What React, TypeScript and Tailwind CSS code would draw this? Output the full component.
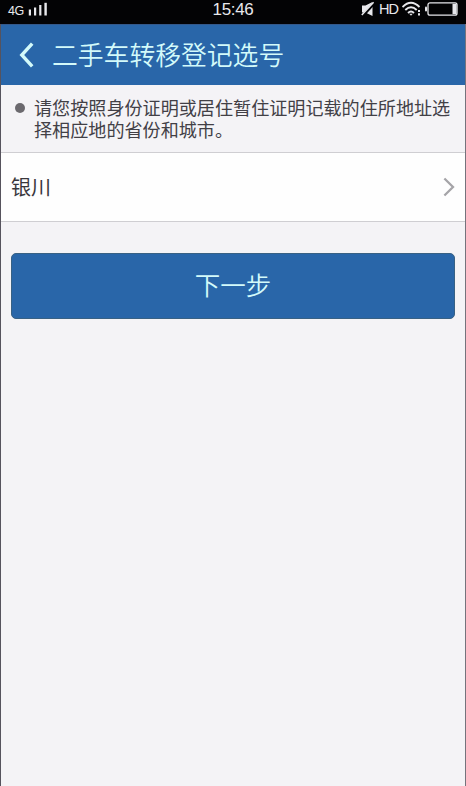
const NOTICE_LINES = ["请您按照身份证明或居住暂住证明记载的住所地址选", "择相应地的省份和城市。"];

function StatusBar() {
  return (
    <div className="grid h-6 shrink-0 grid-cols-3 items-start bg-[#030305] text-[#e8e8ec]">
      <div className="flex pl-2">
        <span className="pt-[4px] text-[12.5px] leading-[14px] tracking-[-0.5px]">4G</span>
        <svg className="ml-1 mt-[2px]" width="20" height="15" viewBox="0 0 20 15" fill="currentColor">
          <rect x="0.8" y="7.5" width="2.2" height="6" />
          <rect x="6" y="5.5" width="2.2" height="8" />
          <rect x="11.2" y="3" width="2.2" height="10.5" />
          <rect x="16.4" y="0.8" width="2.4" height="12.7" />
        </svg>
      </div>
      <div className="pt-px text-center text-[17px] leading-[18px] tracking-[-0.35px]">15:46</div>
      <div className="flex justify-end pr-[8px]">
        <svg className="mt-px" width="14" height="16" viewBox="0 0 14 16">
          <path d="M1 4.5h3.5l7-3.5v14l-7-3.5H1z" fill="currentColor" />
          <path d="M1.2 15.2L13.2 2.2" stroke="#030305" strokeWidth="3" />
          <path d="M0.8 14L12.6 1.2" stroke="currentColor" strokeWidth="1.5" />
        </svg>
        <span className="ml-[4px] pt-[2px] text-[14.5px] leading-[15px] tracking-[-1px]">HD</span>
        <svg className="ml-[4px] mt-px" width="21" height="16" viewBox="0 0 21 16" fill="none" stroke="currentColor" strokeWidth="1.9">
          <path d="M0.5 6Q9 -2.5 17.5 6" />
          <path d="M3.3 9Q9 3.5 14.7 9" />
          <path d="M6 12Q9 9.2 12 12" />
          <path d="M7.3 12.7h3.4L9 14.8z" fill="currentColor" stroke="none" />
          <path d="M17 9v2M17 12.3v2.2" strokeWidth="2" />
        </svg>
        <svg className="ml-[2px] mt-[2px]" width="33" height="14" viewBox="0 0 33 14">
          <rect x="3" y="0.8" width="29" height="12.4" rx="2" fill="none" stroke="currentColor" strokeWidth="1.3" />
          <rect x="0" y="4.5" width="2" height="5" rx="1" fill="currentColor" />
          <rect x="27.5" y="1.8" width="4" height="10.4" fill="currentColor" />
        </svg>
      </div>
    </div>
  );
}

function Header() {
  return (
    <header className="flex h-[61px] shrink-0 items-center border-t border-[#34588a] bg-[#2966a9] pl-[18px] text-[#d3fafa]">
      <svg width="16" height="26" viewBox="0 0 16 26" fill="none" stroke="currentColor" strokeWidth="3.4">
        <path d="M13.2 1.6L2.8 13L13.2 24.4" />
      </svg>
      <h1 className="ml-[17px] pt-px text-[25.8px] font-[350] leading-8">二手车转移登记选号</h1>
    </header>
  );
}

export default function App() {
  return (
    <div className="flex h-[786px] w-[466px] flex-col bg-[#f4f3f6] font-['Liberation_Sans','Noto_Sans_CJK_SC',sans-serif]">
      <StatusBar />
      <div className="flex grow flex-col border-l border-r border-l-[#56535d] border-r-[#75737c]">
        <Header />

        <div className="flex h-[68px] shrink-0 border-b border-[#cfced2] pl-[14px] pt-[14px]">
          <span className="mt-[4px] size-[10px] shrink-0 rounded-full bg-[#6b696e]" />
          <div className="ml-[9px] whitespace-nowrap text-[18.1px] leading-[21.5px] text-[#424046]">
            {NOTICE_LINES.map((line) => (
              <p key={line}>{line}</p>
            ))}
          </div>
        </div>

        <button className="flex h-[69px] shrink-0 items-center justify-between border-b border-[#cfced2] bg-[#fefefe] pl-[10px] pr-[10px] text-[20px] text-[#39373c]">
          <span className="pt-px">银川</span>
          <svg width="12" height="20" viewBox="0 0 12 20" fill="none" stroke="#a5a4a8" strokeWidth="2.3">
            <path d="M1.4 1.5L10 10L1.4 18.5" />
          </svg>
        </button>

        <button className="mx-[10px] mt-[31px] h-[66px] shrink-0 rounded-[5px] border border-[#386184] bg-[#2966a9] text-[25.5px] font-[350] text-[#d3fafa]">
          下一步
        </button>
      </div>
    </div>
  );
}
